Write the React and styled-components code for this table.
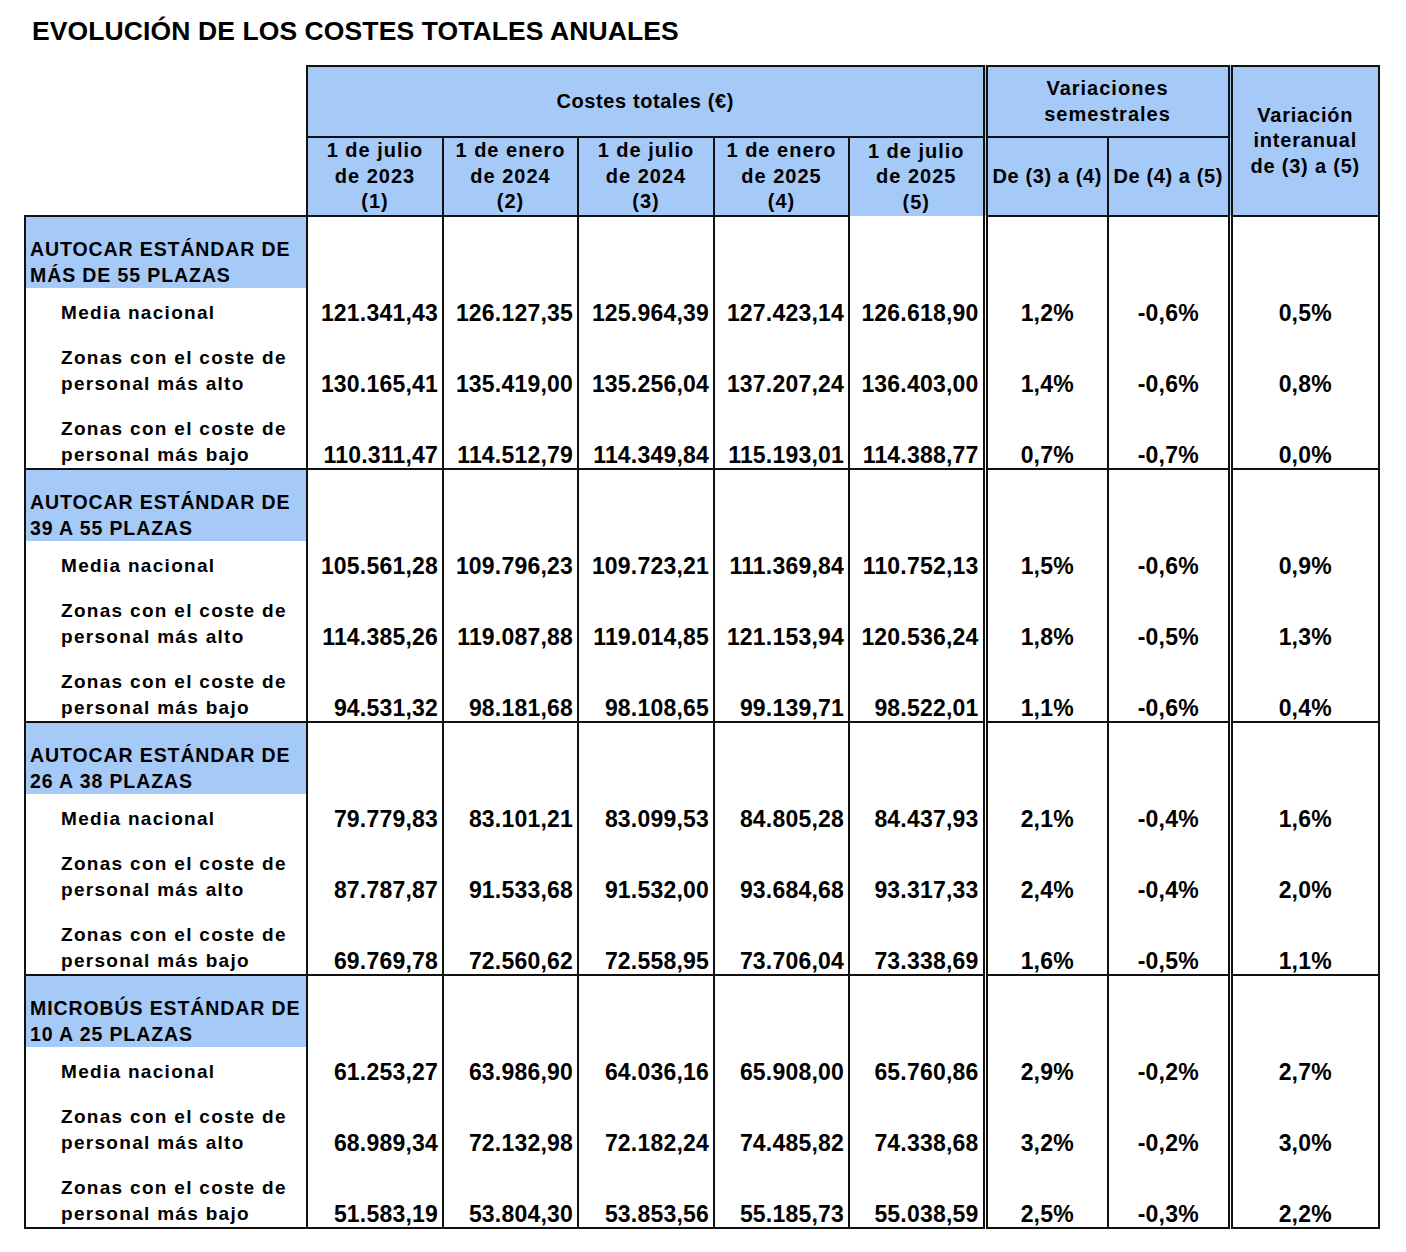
import React from "react";
import styled, { createGlobalStyle } from "styled-components";

const BLUE = "#a6caf8";
const INK = "#111";

const GlobalStyle = createGlobalStyle`
  html, body {
    margin: 0;
    padding: 0;
    background: #fff;
  }
  body {
    font-family: "Liberation Sans", Arial, sans-serif;
    color: #000;
  }
`;

const Page = styled.div`
  width: 1406px;
  box-sizing: border-box;
  padding: 16px 0 20px 24px;
`;

const Title = styled.h1`
  margin: 0 0 19px 8px;
  font-size: 26.5px;
  line-height: 30px;
  font-weight: 700;
  letter-spacing: 0.1px;
`;

const Table = styled.table`
  border-collapse: collapse;
  table-layout: fixed;
  width: 1354px;
`;

const Col = styled.col`
  width: ${(p) => p.$w}px;
  ${(p) => p.$double && `border-left: 5px double ${INK};`}
`;

const Corner = styled.th`
  border: none;
  background: #fff;
  padding: 0;
`;

const HeadRow = styled.tr`
  height: ${(p) => p.$h}px;
`;

const HeadCell = styled.th`
  background: ${BLUE};
  border: 2px solid ${INK};
  ${(p) => p.$open && "border-bottom: hidden;"}
  padding: 0;
  font-size: 20px;
  line-height: 25.5px;
  letter-spacing: ${(p) => p.$spacing ?? 1}px;
  font-weight: 700;
  text-align: center;
  vertical-align: middle;
`;

const Group = styled.tbody`
  border: 2px solid ${INK};
`;

const Row = styled.tr`
  height: ${(p) => p.$h}px;
`;

const Cell = styled.td`
  padding: 0;
  border-left: 2px solid ${INK};
  border-right: 2px solid ${INK};
  vertical-align: bottom;
  font-weight: 700;
  white-space: nowrap;
`;

const GroupLabel = styled(Cell)`
  background: ${BLUE};
  padding-left: 4px;
  font-size: 19.5px;
  line-height: 26px;
  letter-spacing: 0.9px;
`;

const RowLabel = styled(Cell)`
  padding-left: 35px;
  font-size: 19px;
  line-height: 26px;
  letter-spacing: 1.3px;
`;

const Num = styled(Cell)`
  text-align: right;
  padding-right: 4px;
  font-size: 23px;
  line-height: 26px;
  letter-spacing: 0.2px;
`;

const Pct = styled(Num)`
  text-align: center;
  padding-right: 0;
`;

const widths = [282, 136, 135, 136, 135, 136, 123, 122, 149];

const dates = [
  ["1 de julio", "de 2023", "(1)"],
  ["1 de enero", "de 2024", "(2)"],
  ["1 de julio", "de 2024", "(3)"],
  ["1 de enero", "de 2025", "(4)"],
  ["1 de julio", "de 2025", "(5)"],
];

const groups = [
  {
    title: ["AUTOCAR ESTÁNDAR DE", "MÁS DE 55 PLAZAS"],
    rows: [
      ["121.341,43", "126.127,35", "125.964,39", "127.423,14", "126.618,90", "1,2%", "-0,6%", "0,5%"],
      ["130.165,41", "135.419,00", "135.256,04", "137.207,24", "136.403,00", "1,4%", "-0,6%", "0,8%"],
      ["110.311,47", "114.512,79", "114.349,84", "115.193,01", "114.388,77", "0,7%", "-0,7%", "0,0%"],
    ],
  },
  {
    title: ["AUTOCAR ESTÁNDAR DE", "39 A 55 PLAZAS"],
    rows: [
      ["105.561,28", "109.796,23", "109.723,21", "111.369,84", "110.752,13", "1,5%", "-0,6%", "0,9%"],
      ["114.385,26", "119.087,88", "119.014,85", "121.153,94", "120.536,24", "1,8%", "-0,5%", "1,3%"],
      ["94.531,32", "98.181,68", "98.108,65", "99.139,71", "98.522,01", "1,1%", "-0,6%", "0,4%"],
    ],
  },
  {
    title: ["AUTOCAR ESTÁNDAR DE", "26 A 38 PLAZAS"],
    rows: [
      ["79.779,83", "83.101,21", "83.099,53", "84.805,28", "84.437,93", "2,1%", "-0,4%", "1,6%"],
      ["87.787,87", "91.533,68", "91.532,00", "93.684,68", "93.317,33", "2,4%", "-0,4%", "2,0%"],
      ["69.769,78", "72.560,62", "72.558,95", "73.706,04", "73.338,69", "1,6%", "-0,5%", "1,1%"],
    ],
  },
  {
    title: ["MICROBÚS ESTÁNDAR DE", "10 A 25 PLAZAS"],
    rows: [
      ["61.253,27", "63.986,90", "64.036,16", "65.908,00", "65.760,86", "2,9%", "-0,2%", "2,7%"],
      ["68.989,34", "72.132,98", "72.182,24", "74.485,82", "74.338,68", "3,2%", "-0,2%", "3,0%"],
      ["51.583,19", "53.804,30", "53.853,56", "55.185,73", "55.038,59", "2,5%", "-0,3%", "2,2%"],
    ],
  },
];

const rowLabels = [
  { lines: ["Media nacional"], h: 38 },
  { lines: ["Zonas con el coste de", "personal más alto"], h: 71 },
  { lines: ["Zonas con el coste de", "personal más bajo"], h: 72 },
];

const Lines = ({ lines }) =>
  lines.map((l, i) => (
    <React.Fragment key={i}>
      {i > 0 && <br />}
      {l}
    </React.Fragment>
  ));

export default function App() {
  return (
    <>
      <GlobalStyle />
      <Page>
        <Title>EVOLUCIÓN DE LOS COSTES TOTALES ANUALES</Title>
        <Table>
          <colgroup>
            {widths.map((w, i) => (
              <Col key={i} $w={w} $double={i === 6 || i === 8} />
            ))}
          </colgroup>
          <thead>
            <HeadRow $h={71}>
              <Corner rowSpan={2} />
              <HeadCell colSpan={5} $spacing={0.6}>Costes totales (€)</HeadCell>
              <HeadCell colSpan={2}>
                Variaciones
                <br />
                semestrales
              </HeadCell>
              <HeadCell rowSpan={2} $spacing={0.8}>
                Variación
                <br />
                interanual
                <br />
                de (3) a (5)
              </HeadCell>
            </HeadRow>
            <HeadRow $h={79}>
              {dates.map((d, i) => (
                <HeadCell key={i} $open={i === 4}>
                  <Lines lines={d} />
                </HeadCell>
              ))}
              <HeadCell $spacing={0.6}>De (3) a (4)</HeadCell>
              <HeadCell $spacing={0.6}>De (4) a (5)</HeadCell>
            </HeadRow>
          </thead>
          {groups.map((g, gi) => (
            <Group key={gi}>
              <Row $h={72}>
                <GroupLabel>
                  <Lines lines={g.title} />
                </GroupLabel>
                {widths.slice(1).map((_, i) => (
                  <Cell key={i} />
                ))}
              </Row>
              {g.rows.map((r, ri) => (
                <Row key={ri} $h={rowLabels[ri].h}>
                  <RowLabel>
                    <Lines lines={rowLabels[ri].lines} />
                  </RowLabel>
                  {r.slice(0, 5).map((v, i) => (
                    <Num key={i}>{v}</Num>
                  ))}
                  {r.slice(5).map((v, i) => (
                    <Pct key={i}>{v}</Pct>
                  ))}
                </Row>
              ))}
            </Group>
          ))}
        </Table>
      </Page>
    </>
  );
}
